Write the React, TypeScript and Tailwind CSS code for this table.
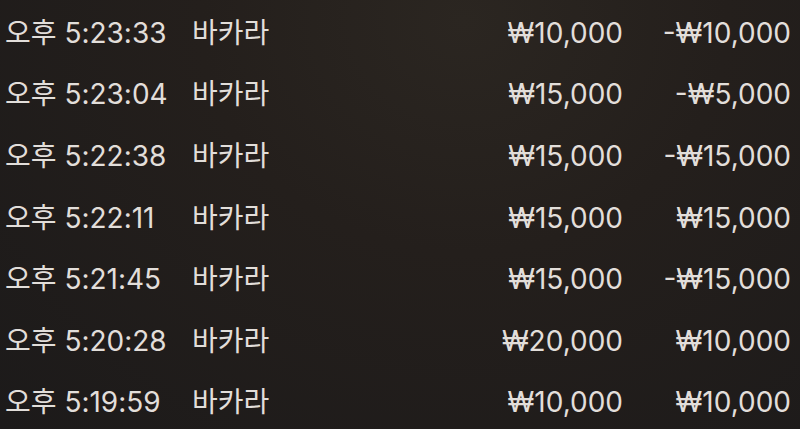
const rows = [
  { time: "오후 5:23:33", game: "바카라", bet: "₩10,000", net: "-₩10,000" },
  { time: "오후 5:23:04", game: "바카라", bet: "₩15,000", net: "-₩5,000" },
  { time: "오후 5:22:38", game: "바카라", bet: "₩15,000", net: "-₩15,000" },
  { time: "오후 5:22:11", game: "바카라", bet: "₩15,000", net: "₩15,000" },
  { time: "오후 5:21:45", game: "바카라", bet: "₩15,000", net: "-₩15,000" },
  { time: "오후 5:20:28", game: "바카라", bet: "₩20,000", net: "₩10,000" },
  { time: "오후 5:19:59", game: "바카라", bet: "₩10,000", net: "₩10,000" },
];

export default function App() {
  return (
    <div
      className="h-[429px] w-[800px] overflow-hidden bg-[radial-gradient(ellipse_at_58%_5%,#2b2621_0%,#241f1c_40%,#1c1a1a_100%)] pt-[2px] text-[28px] text-[#e2deda]"
      style={{ fontFamily: "Inter, 'Noto Sans CJK KR', sans-serif" }}
    >
      {rows.map((r) => (
        <div key={r.time} className="flex h-[61.6px] items-center pl-[5px] pr-[9px] leading-none">
          <span className="w-[187px] shrink-0">{r.time}</span>
          <span className="flex-1">{r.game}</span>
          <span className="w-[160px] text-right">{r.bet}</span>
          <span className="w-[168px] text-right">{r.net}</span>
        </div>
      ))}
    </div>
  );
}
